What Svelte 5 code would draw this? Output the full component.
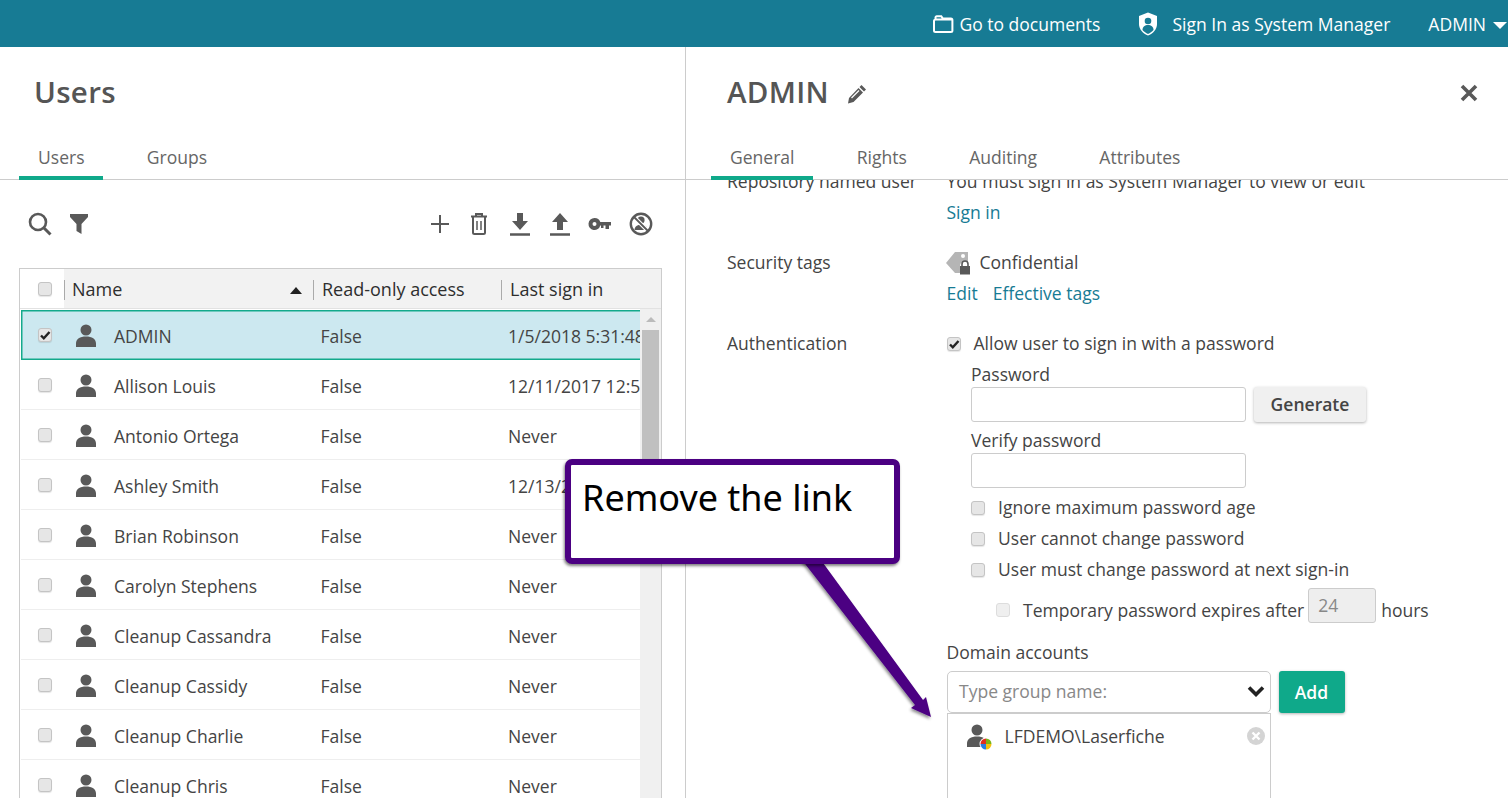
<script>
  const users = [
    { name: 'ADMIN', login: '1/5/2018 5:31:48 PM', selected: true },
    { name: 'Allison Louis', login: '12/11/2017 12:58:11 PM' },
    { name: 'Antonio Ortega', login: 'Never' },
    { name: 'Ashley Smith', login: '12/13/2017 9:12:40 AM' },
    { name: 'Brian Robinson', login: 'Never' },
    { name: 'Carolyn Stephens', login: 'Never' },
    { name: 'Cleanup Cassandra', login: 'Never' },
    { name: 'Cleanup Cassidy', login: 'Never' },
    { name: 'Cleanup Charlie', login: 'Never' },
    { name: 'Cleanup Chris', login: 'Never' }
  ];
  const personPath = 'M12 0.500a5.500 5.500 0 1 1 0 11a5.500 5.500 0 0 1 0-11zM2 23v-3.500C2 15 6 12.500 12 12.500s10 2.500 10 7V23z';
</script>

<div class="page">
  <header class="topbar">
    <a class="top-link docs">
      <svg width="21" height="18" viewBox="0 0 21 18"><path d="M2.500 4.500V2.500a1.200 1.200 0 0 1 1.200-1.200h4.600l1.600 2.200h8a1.500 1.500 0 0 1 1.500 1.500v10.500a1.500 1.500 0 0 1-1.500 1.500H2.500A1.500 1.500 0 0 1 1 15.500V6a1.500 1.500 0 0 1 1.500-1.500H19" fill="none" stroke="#fff" stroke-width="2"/></svg>
      Go to documents
    </a>
    <a class="top-link sysman">
      <svg width="20" height="24" viewBox="0 0 20 24"><path d="M10 0.500L19 4v8c0 5.500-4 9.500-9 11.500C5 21.500 1 17.500 1 12V4z" fill="#fff"/><circle cx="10" cy="9" r="3.300" fill="#177b94"/><path d="M4.500 18c0-3.500 2.500-5 5.500-5s5.500 1.500 5.500 5C14 19.800 12 21 10 22c-2-1-4-2.200-5.500-4z" fill="#177b94"/></svg>
      Sign In as System Manager
    </a>
    <a class="top-link account">ADMIN <span class="caret"></span></a>
  </header>

  <div class="columns">
    <section class="left">
      <h1>Users</h1>
      <nav class="tabs left-tabs">
        <span class="tab active">Users</span>
        <span class="tab">Groups</span>
      </nav>

      <div class="toolbar">
        <div class="tool-group">
          <svg width="24" height="24" viewBox="0 0 24 24"><circle cx="10" cy="10" r="8" fill="none" stroke="#595959" stroke-width="2.600"/><path d="M16 16l6.500 6.500" stroke="#595959" stroke-width="3"/></svg>
          <svg class="filter" width="20" height="22" viewBox="0 0 20 22"><path d="M1 1h18v3l-6.500 7v10l-5-3v-7L1 4z" fill="#595959"/></svg>
        </div>
        <div class="tool-group right-tools">
          <svg width="20" height="20" viewBox="0 0 20 20"><path d="M10 1v18M1 10h18" stroke="#595959" stroke-width="2"/></svg>
          <svg width="18" height="22" viewBox="0 0 18 22"><path d="M1 3.500h16M6 3V1h6v2" fill="none" stroke="#595959" stroke-width="2"/><path d="M3 4v15.500a1.500 1.500 0 0 0 1.500 1.500h9a1.500 1.500 0 0 0 1.500-1.500V4" fill="none" stroke="#595959" stroke-width="2"/><path d="M7 8v9M11 8v9" stroke="#595959" stroke-width="1.500"/></svg>
          <svg class="download" width="20" height="24" viewBox="0 0 20 24"><path d="M7 1h6v8h5l-8 9-8-9h5z" fill="#595959"/><path d="M0 22.500h20" stroke="#595959" stroke-width="2.500"/></svg>
          <svg width="20" height="24" viewBox="0 0 20 24"><path d="M10 1l8 9h-5v8H7v-8H2z" fill="#595959"/><path d="M0 22.500h20" stroke="#595959" stroke-width="2.500"/></svg>
          <svg class="key" width="24" height="14" viewBox="0 0 24 14"><path d="M6.500 1a6 6 0 0 1 5.800 4H23v3.500h-2V12h-3.500V8.500h-2V11H13V8.500h-.7A6 6 0 1 1 6.500 1zm0 4a2 2 0 1 0 0 4a2 2 0 0 0 0-4z" fill="#595959" fill-rule="evenodd"/></svg>
          <svg class="disable" width="24" height="24" viewBox="0 0 24 24"><circle cx="12" cy="8" r="3.600" fill="#595959"/><path d="M5.500 18c0-3.500 3-5.200 6.500-5.200s6.500 1.700 6.500 5.200z" fill="#595959"/><path d="M4.500 4.500l15 15" stroke="#fff" stroke-width="4"/><path d="M4.500 4.500l15 15" stroke="#595959" stroke-width="1.800"/><circle cx="12" cy="12" r="10.200" fill="none" stroke="#595959" stroke-width="2.400"/></svg>
        </div>
      </div>

      <div class="grid">
        <div class="grid-head">
          <div class="head-check"><span class="box"></span></div>
          <div class="head-cell name-col">Name <span class="sort"></span></div>
          <div class="head-cell ro-col">Read-only access</div>
          <div class="head-cell login-col">Last sign in</div>
        </div>
        <div class="grid-body">
          <div class="rows">
            {#each users as user}
              <div class="row" class:selected={user.selected}>
                <div class="check-col">
                  <span class="box">
                    {#if user.selected}
                      <svg width="12" height="12" viewBox="0 0 12 12"><path d="M2 6.500l2.800 2.800L10.500 3" fill="none" stroke="#222" stroke-width="2.400"/></svg>
                    {/if}
                  </span>
                </div>
                <div class="user-col">
                  <svg width="24" height="24" viewBox="0 0 24 24"><path d={personPath} fill="#595959"/></svg>
                  <span>{user.name}</span>
                </div>
                <div class="false-col">False</div>
                <div class="date-col">{user.login}</div>
              </div>
            {/each}
          </div>
          <div class="scrollbar">
            <span class="scroll-up"></span>
            <span class="scroll-thumb"></span>
          </div>
        </div>
      </div>
    </section>

    <section class="right">
      <div class="title-row">
        <h2>ADMIN</h2>
        <svg class="pencil" width="20" height="20" viewBox="0 0 20 20"><path d="M14.500 1l4.500 4.500-2 2L12.500 3zM11.500 4l4.500 4.500L6.500 18 1 19.500 2 14z" fill="#595959"/><path d="M12 6.500l-7.500 7.500" stroke="#fff" stroke-width="1.200"/></svg>
        <svg class="close" width="18" height="18" viewBox="0 0 18 18"><path d="M2 2l14 14M16 2L2 16" stroke="#595959" stroke-width="3.600"/></svg>
      </div>
      <nav class="tabs right-tabs">
        <span class="tab active">General</span>
        <span class="tab">Rights</span>
        <span class="tab">Auditing</span>
        <span class="tab">Attributes</span>
      </nav>

      <div class="scroller">
        <div class="form">
          <div class="field">
            <div class="label">Repository named user</div>
            <div class="value">
              <div class="line">You must sign in as System Manager to view or edit</div>
              <div class="line"><a class="link">Sign in</a></div>
            </div>
          </div>

          <div class="field">
            <div class="label">Security tags</div>
            <div class="value">
              <div class="line tag-line">
                <svg width="24" height="24" viewBox="0 0 24 24"><path d="M0 12L9 1h13v10h-4a4 4 0 0 0-4 4v7H9z" fill="#b5b5b5"/><circle cx="17" cy="5" r="2" fill="#fff"/><path d="M14 15h10v8.500H14z" fill="#595959"/><path d="M16 15v-2a3 3 0 0 1 6 0v2" fill="none" stroke="#595959" stroke-width="1.600"/></svg>
                Confidential
              </div>
              <div class="line"><a class="link">Edit</a><a class="link second">Effective tags</a></div>
            </div>
          </div>

          <div class="field">
            <div class="label">Authentication</div>
            <div class="value">
              <div class="line check-line">
                <span class="box">
                  <svg width="12" height="12" viewBox="0 0 12 12"><path d="M2 6.500l2.800 2.800L10.500 3" fill="none" stroke="#222" stroke-width="2.400"/></svg>
                </span>
                Allow user to sign in with a password
              </div>
              <div class="password">
                <div class="small-label">Password</div>
                <div class="input-row">
                  <span class="input"></span>
                  <span class="btn generate">Generate</span>
                </div>
                <div class="small-label verify">Verify password</div>
                <span class="input"></span>
                <div class="line check-line opts first-opt"><span class="box"></span>Ignore maximum password age</div>
                <div class="line check-line opts"><span class="box"></span>User cannot change password</div>
                <div class="line check-line opts"><span class="box"></span>User must change password at next sign-in</div>
                <div class="expires">
                  <span class="box faded"></span>
                  <span class="expires-text">Temporary password expires after</span>
                  <span class="hours-input">24</span>
                  <span class="expires-text">hours</span>
                </div>
              </div>
              <div class="small-label domain">Domain accounts</div>
              <div class="domain-row">
                <div class="select">
                  <span>Type group name:</span>
                  <svg width="18" height="12" viewBox="0 0 18 12"><path d="M2 2.500l7 7 7-7" fill="none" stroke="#222" stroke-width="3.600"/></svg>
                </div>
                <span class="btn add">Add</span>
              </div>
              <div class="domain-list">
                <svg width="28" height="28" viewBox="0 0 28 28">
                  <path d={personPath} fill="#595959"/>
                  <circle cx="21" cy="20" r="6.500" fill="#fff"/>
                  <path d="M21 20V14.500A5.500 5.500 0 0 1 26.500 20z" fill="#7cb518"/>
                  <path d="M21 20h5.500A5.500 5.500 0 0 1 21 25.500z" fill="#f4c20d"/>
                  <path d="M21 20v5.500A5.500 5.500 0 0 1 15.500 20z" fill="#2a7de1"/>
                  <path d="M21 20h-5.500A5.500 5.500 0 0 1 21 14.500z" fill="#e0301e"/>
                </svg>
                <span class="account-name">LFDEMO\Laserfiche</span>
                <svg class="remove" width="18" height="18" viewBox="0 0 18 18"><circle cx="9" cy="9" r="9" fill="#d4d4d4"/><path d="M5.500 5.500l7 7M12.500 5.500l-7 7" stroke="#fff" stroke-width="2.400"/></svg>
              </div>
            </div>
          </div>
        </div>
      </div>
    </section>
  </div>

  <!-- annotation pasted on top of the screenshot -->
  <svg class="arrow" width="1508" height="798" viewBox="0 0 1508 798">
    <defs>
      <filter id="shade" x="-20%" y="-20%" width="140%" height="140%"><feDropShadow dx="-1" dy="2" stdDeviation="1.500" flood-color="#000" flood-opacity="0.45"/></filter>
    </defs>
    <path d="M802 560L818 556L923 700L926 697L931 717L911 708L915 705z" fill="#4b0082" filter="url(#shade)"/>
  </svg>
  <div class="callout">Remove the link</div>
</div>

<style>
  :global(body) {
    margin: 0;
    font-family: "Open Sans", "Noto Sans", sans-serif;
    color: #444;
    background: #fff;
  }
  .page {
    position: relative;
    width: 1508px;
    height: 798px;
    overflow: hidden;
    font-size: 17.55px;
  }
  .topbar {
    height: 47px;
    background: #177b94;
    display: flex;
    align-items: center;
    justify-content: flex-end;
    color: #fff;
  }
  .top-link {
    display: flex;
    align-items: center;
    white-space: nowrap;
  }
  .docs { gap: 5px; margin-right: 38px; }
  .sysman { gap: 14px; margin-right: 38px; }
  .account { margin-right: 1px; gap: 7px; }
  .caret {
    width: 0;
    height: 0;
    border-left: 7px solid transparent;
    border-right: 7px solid transparent;
    border-top: 7px solid #fff;
    margin-top: 3px;
  }
  .columns {
    display: flex;
    height: 751px;
  }
  .left {
    width: 685px;
    border-right: 1px solid #ccc;
    flex: none;
  }
  .right {
    flex: 1;
    min-width: 0;
  }
  h1, h2 {
    margin: 0;
    font-size: 29.5px;
    line-height: 40px;
    font-weight: 600;
    color: #555;
    letter-spacing: 0.3px;
  }
  h1 {
    padding: 25px 0 0 34px;
    height: 66px;
    box-sizing: border-box;
  }
  .tabs {
    height: 67px;
    box-sizing: border-box;
    border-bottom: 1px solid #ccc;
    display: flex;
    align-items: flex-end;
    gap: 24.5px;
  }
  .tab {
    height: 29px;
    line-height: 20px;
    color: #666;
    padding: 0 18.75px 0 19px;
    border-bottom: 4px solid transparent;
    margin-bottom: -1px;
  }
  .tab.active {
    border-bottom-color: #0fa98a;
  }
  .left-tabs { padding-left: 19px; }
  .toolbar {
    height: 88px;
    display: flex;
    align-items: center;
    justify-content: space-between;
    padding: 0 32px 0 28px;
  }
  .tool-group { display: flex; align-items: center; }
  .filter { margin-left: 17px; }
  .right-tools { gap: 20px; }
  .download { margin-left: 2px; }
  .key { margin-left: -2px; }
  .disable { margin-left: -3px; }
  .grid {
    margin-left: 19px;
    width: 643px;
    box-sizing: border-box;
    border: 1px solid #ccc;
    border-bottom: 0;
    height: 540px;
  }
  .grid-head {
    height: 39px;
    display: flex;
    border-bottom: 1px solid #e2e2e2;
    font-size: 18px;
    color: #2e2e2e;
  }
  .head-check {
    width: 44px;
    display: flex;
    align-items: center;
    padding-left: 18px;
    box-sizing: border-box;
  }
  .head-cell {
    background: #f2f2f2;
    height: 39px;
    line-height: 41px;
    position: relative;
    padding-left: 8px;
    box-sizing: border-box;
  }
  .head-cell::before {
    content: "";
    position: absolute;
    left: 0;
    top: 11px;
    height: 20px;
    width: 1px;
    background: #aaa;
  }
  .name-col { width: 249px; }
  .ro-col { width: 188px; padding-left: 9px; }
  .login-col { flex: 1; padding-left: 9px; }
  .sort {
    position: absolute;
    right: 11px;
    top: 18px;
    border-left: 6px solid transparent;
    border-right: 6px solid transparent;
    border-bottom: 7px solid #222;
  }
  .grid-body {
    display: flex;
    height: 500px;
  }
  .rows {
    width: 620px;
    padding-top: 1px;
    overflow: hidden;
  }
  .row {
    height: 50px;
    width: 640px;
    display: flex;
    align-items: center;
    box-sizing: border-box;
    border-bottom: 1px solid #eee;
    padding-top: 2px;
    margin-left: 1px;
    white-space: nowrap;
  }
  .row.selected {
    background: #cce8f0;
    border-bottom: 0;
    box-shadow: inset 0 0 0 1.5px #14a98c;
  }
  .check-col {
    width: 44px;
    flex: none;
    padding-left: 17px;
    margin-top: -2px;
    box-sizing: border-box;
    display: flex;
  }
  .user-col {
    width: 255.5px;
    flex: none;
    display: flex;
    align-items: center;
    gap: 16px;
    padding-left: 9px;
    box-sizing: border-box;
  }
  .false-col { width: 187.500px; flex: none; }
  .date-col { flex: none; }
  .scrollbar {
    width: 21px;
    background: #f0f0f0;
    position: relative;
    display: flex;
    flex-direction: column;
    align-items: center;
  }
  .scroll-up {
    margin-top: 8px;
    border-left: 5px solid transparent;
    border-right: 5px solid transparent;
    border-bottom: 5px solid #bbb;
  }
  .scroll-thumb {
    margin-top: 8px;
    width: 17px;
    height: 190px;
    background: #c0c0c0;
  }
  .box {
    display: inline-flex;
    align-items: center;
    justify-content: center;
    width: 14px;
    height: 14px;
    flex: none;
    box-sizing: border-box;
    background: #e6e6e6;
    border: 1px solid #c4c4c4;
    border-radius: 3px;
    box-shadow: 0 1px 1px rgba(0, 0, 0, 0.1);
  }
  .box.faded { background: #efefef; border-color: #ddd; box-shadow: none; }
  .title-row {
    height: 66px;
    display: flex;
    align-items: flex-start;
    padding: 25px 0 0 41px;
    box-sizing: border-box;
    position: relative;
  }
  .pencil { margin: 12px 0 0 18px; }
  .close { position: absolute; right: 30px; top: 37px; }
  .right-tabs { padding-left: 25px; }
  .scroller {
    height: 618px;
    overflow: hidden;
  }
  .form {
    margin-top: -14px;
    padding-left: 41px;
  }
  .field {
    display: flex;
    margin-bottom: 19px;
  }
  .label {
    width: 219.5px;
    flex: none;
    line-height: 31px;
    white-space: nowrap;
  }
  .value { flex: 1; min-width: 0; }
  .line {
    height: 31px;
    line-height: 31px;
    white-space: nowrap;
  }
  .link { color: #177b94; }
  .second { margin-left: 15px; }
  .tag-line { display: flex; align-items: center; gap: 10px; }
  .tag-line svg { margin-left: -1px; }
  .check-line { display: flex; align-items: center; gap: 13px; }
  .password { padding-left: 24.5px; padding-top: 3px; }
  .small-label { line-height: 24px; height: 24px; margin-bottom: 1px; }
  .verify { margin-top: 6px; }
  .input-row { display: flex; gap: 8px; }
  .input {
    display: block;
    width: 275px;
    height: 35px;
    box-sizing: border-box;
    border: 1px solid #ccc;
    border-radius: 3px;
    background: #fff;
  }
  .btn {
    display: flex;
    align-items: center;
    justify-content: center;
    font-weight: 600;
    border-radius: 3px;
    box-shadow: 0 1px 3px rgba(0, 0, 0, 0.3);
  }
  .generate {
    width: 112px;
    height: 35px;
    box-sizing: border-box;
    padding-bottom: 2px;
    background: #f0f0f0;
    color: #444;
  }
  .opts { gap: 13px; }
  .first-opt { margin-top: 4px; }
  .expires {
    display: flex;
    margin-top: 3px;
    padding-left: 25px;
    height: 35px;
    white-space: nowrap;
  }
  .expires .box { margin-top: 15px; margin-right: 13px; }
  .expires-text { line-height: 24px; margin-top: 10px; }
  .hours-input {
    width: 68px;
    height: 35px;
    margin: 0 5px 0 4px;
    box-sizing: border-box;
    border: 1px solid #ccc;
    border-radius: 3px;
    background: #eee;
    color: #888;
    padding-left: 9px;
    line-height: 33px;
  }
  .domain { margin-top: 17px; margin-bottom: 7px; }
  .domain-row { display: flex; gap: 8px; }
  .select {
    width: 324px;
    height: 42px;
    box-sizing: border-box;
    border: 1px solid #ccc;
    border-radius: 5px;
    display: flex;
    align-items: center;
    justify-content: space-between;
    padding: 0 5px 2px 11.5px;
    color: #888;
  }
  .add {
    width: 66px;
    height: 42px;
    background: #0fa98a;
    color: #fff;
  }
  .domain-list {
    width: 324px;
    height: 120px;
    box-sizing: border-box;
    border: 1px solid #ccc;
    position: relative;
    display: flex;
    align-items: flex-start;
    padding: 10px 0 0 17px;
  }
  .account-name { margin-left: 12px; line-height: 24px; }
  .remove { position: absolute; right: 5px; top: 13px; }
  .arrow {
    position: absolute;
    left: 0;
    top: 0;
    pointer-events: none;
  }
  .callout {
    position: absolute;
    left: 565px;
    top: 459px;
    width: 335px;
    height: 105px;
    box-sizing: border-box;
    border: 6px solid #4b0082;
    border-radius: 7px;
    background: #fff;
    box-shadow: -1px 2px 3px rgba(0, 0, 0, 0.5);
    padding: 10px 0 0 11px;
    font-family: "Noto Sans", "Open Sans", sans-serif;
    font-size: 36px;
    line-height: 46px;
    color: #000;
  }
</style>
